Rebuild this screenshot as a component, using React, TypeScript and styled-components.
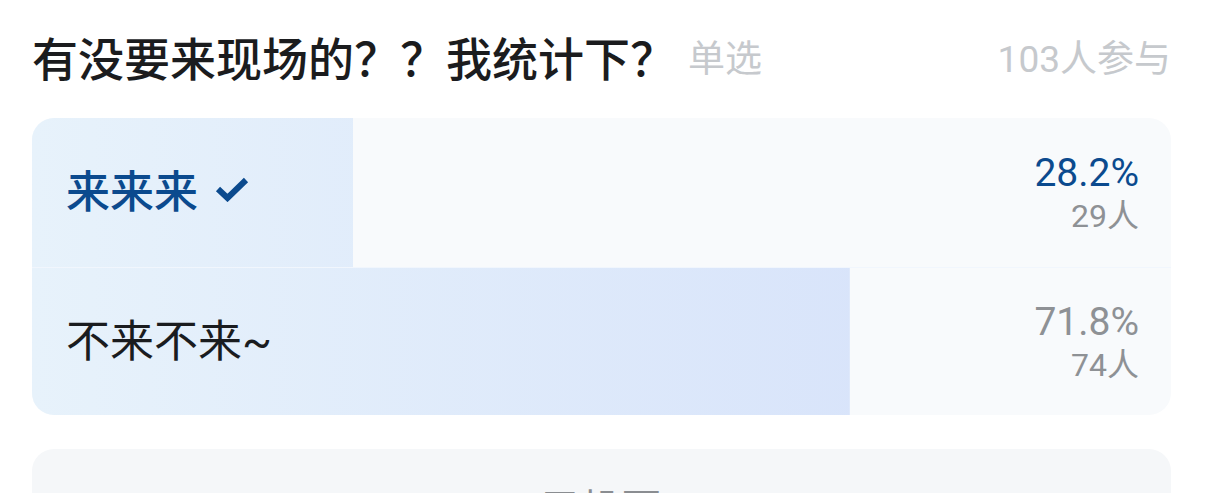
import styled, { createGlobalStyle } from "styled-components";

const GlobalStyle = createGlobalStyle`
  html, body {
    margin: 0;
    padding: 0;
    background: #ffffff;
  }
  body {
    font-family: "Roboto", "Noto Sans CJK SC", sans-serif;
  }
`;

const Page = styled.div`
  width: 1208px;
  padding: 0 37px 0 32px;
  box-sizing: border-box;
`;

const Header = styled.div`
  display: flex;
  align-items: center;
  height: 118px;
  padding-bottom: 6px;
  box-sizing: border-box;
`;

const Title = styled.h1`
  margin: 0;
  font-size: 46px;
  font-weight: 500;
  color: #1b1c1e;
`;

const Tag = styled.span`
  margin-left: 12px;
  font-size: 37px;
  color: #c6c9cd;
`;

const Count = styled.span`
  margin-left: auto;
  font-size: 37px;
  color: #c6c9cd;
`;

const Card = styled.div`
  display: flex;
  flex-direction: column;
  border-radius: 22px;
  background: #f8fafc;
  overflow: hidden;
`;

const Row = styled.div<{ $pct: number }>`
  display: flex;
  align-items: center;
  justify-content: space-between;
  height: 149px;
  padding: 0 32px 0 34px;
  box-sizing: border-box;
  background-image: linear-gradient(90deg, #e7f2fb 0px, #d3dffa 1139px);
  background-size: ${(p) => p.$pct}% 100%;
  background-repeat: no-repeat;
  & + & {
    border-top: 1px solid #f1f6fd;
    height: 148px;
  }
`;

const Label = styled.div<{ $picked?: boolean }>`
  display: flex;
  align-items: center;
  gap: 17px;
  margin-bottom: 8px;
  font-size: 44px;
  font-weight: ${(p) => (p.$picked ? 500 : 400)};
  color: ${(p) => (p.$picked ? "#0b4a8e" : "#1a1c1f")};
`;

const Stats = styled.div`
  display: flex;
  flex-direction: column;
  align-items: flex-end;
  line-height: 1.2;
`;

const Percent = styled.span<{ $picked?: boolean }>`
  font-size: 39px;
  color: ${(p) => (p.$picked ? "#0b4a8e" : "#8e9195")};
`;

const Voters = styled.span`
  font-size: 32px;
  color: #8e9195;
`;

const VoteButton = styled.div`
  display: flex;
  align-items: center;
  justify-content: center;
  height: 114px;
  margin-top: 34px;
  border-radius: 22px;
  background: #f5f7f9;
  font-size: 40px;
  color: #8a8d91;
`;

const Check = () => (
  <svg width="34" height="26" viewBox="0 0 34 26" fill="none">
    <path
      d="M3 13 L12.5 22 L31 4"
      stroke="#0b4a8e"
      strokeWidth="6"
      strokeLinecap="butt"
      strokeLinejoin="miter"
    />
  </svg>
);

const options = [
  { text: "来来来", pct: 28.2, count: 29, picked: true },
  { text: "不来不来~", pct: 71.8, count: 74, picked: false },
];

export default function App() {
  return (
    <Page>
      <GlobalStyle />
      <Header>
        <Title>有没要来现场的？？我统计下？</Title>
        <Tag>单选</Tag>
        <Count>103人参与</Count>
      </Header>
      <Card>
        {options.map((o) => (
          <Row key={o.text} $pct={o.pct}>
            <Label $picked={o.picked}>
              {o.text}
              {o.picked && <Check />}
            </Label>
            <Stats>
              <Percent $picked={o.picked}>{o.pct}%</Percent>
              <Voters>{o.count}人</Voters>
            </Stats>
          </Row>
        ))}
      </Card>
      <VoteButton>已投票</VoteButton>
    </Page>
  );
}
